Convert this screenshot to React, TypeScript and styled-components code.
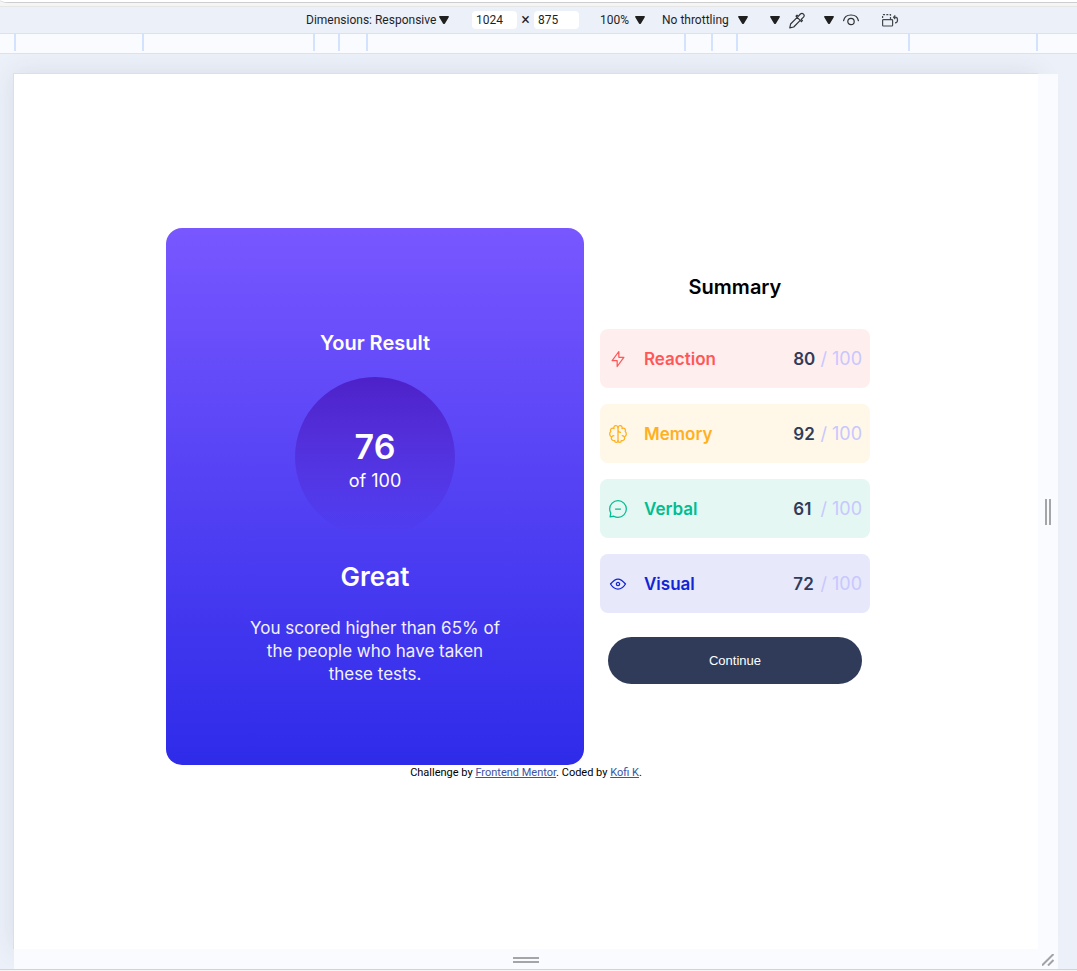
import React from "react";
import styled, { createGlobalStyle } from "styled-components";

const GlobalStyle = createGlobalStyle`
  *, *::before, *::after { box-sizing: border-box; }
  body { margin: 0; background: #f5f5f5; }
  h1, h2, p { margin: 0; }
  button, input, select { font: inherit; color: inherit; }
`;

const uiFont = `Roboto, "Open Sans", sans-serif`;
const cardFont = `Inter, "Liberation Sans", sans-serif`;

const Page = styled.div`
  display: flex;
  flex-direction: column;
  min-height: 100vh;
`;

const WindowEdge = styled.div`
  height: 3px;
  background: #fff;
  border-bottom: 1px solid #cdcdcd;
  border-bottom-left-radius: 8px 3px;
`;

const Toolbar = styled.div`
  display: flex;
  align-items: center;
  justify-content: center;
  height: 28px;
  margin-top: 3px;
  padding-left: 128px;
  background: #ebf0f9;
  border-top: 1px solid #e6e6e6;
  border-bottom: 1px solid #d6e2fb;
  font-family: ${uiFont};
  font-size: 12px;
  line-height: 18px;
  color: #1f1f1f;
`;

const Picker = styled.label<{ $width: number }>`
  display: grid;
  align-items: center;
  width: ${(p) => p.$width}px;
  flex: none;
  select, svg { grid-area: 1 / 1; }
  svg { justify-self: end; pointer-events: none; }
`;

const Select = styled.select`
  appearance: none;
  width: 100%;
  padding: 0;
  border: 0;
  background: transparent;
  outline: none;
`;

const SizeInput = styled.input`
  width: 45px;
  height: 18px;
  padding: 0 4px;
  border: 0;
  border-radius: 4px;
  background: #fff;
  outline: none;
`;

const Sizes = styled.div`
  display: flex;
  align-items: center;
  margin: 0 21px 0 23px;
`;

const Times = styled.span`
  width: 17px;
  font-size: 16px;
  text-align: center;
`;

const Tools = styled.div`
  display: flex;
  align-items: center;
  margin-left: 17px;
`;

const ToolButton = styled.button<{ $gap: number }>`
  display: flex;
  flex: none;
  margin: 0 0 0 ${(p) => p.$gap}px;
  padding: 0;
  border: 0;
  background: transparent;
`;

const Ruler = styled.div`
  display: flex;
  justify-content: center;
  height: 20px;
  padding: 0 25px 2px 0;
  background: #f9fbff;
  border-bottom: 1px solid #d6e2fb;
  overflow: hidden;
`;

const Range = styled.div<{ $width: number; $side: "left" | "right" | "both" }>`
  flex: none;
  width: ${(p) => p.$width}px;
  border: 0 solid #d3e3fd;
  border-left-width: ${(p) => (p.$side === "right" ? 0 : 2)}px;
  border-right-width: ${(p) => (p.$side === "left" ? 0 : 2)}px;
`;

const Stage = styled.div`
  display: flex;
  flex: 1;
  padding: 19px 19px 0 13px;
  background: #ebf0f9;
  border-bottom: 1px solid #d0d3d8;
  margin-bottom: 1px;
  overflow: hidden;
`;

const Device = styled.div`
  flex: 1;
  display: grid;
  grid-template-columns: 1fr 20px;
  grid-template-rows: 1fr 20px;
`;

const Screen = styled.main`
  display: flex;
  flex-direction: column;
  align-items: center;
  justify-content: center;
  background: #fff;
  border: 1px solid #dcdfe4;
  border-width: 1px 0 0 1px;
  box-shadow: 0 0 24px rgba(60, 64, 67, 0.1);
  font-family: ${cardFont};
`;

const Handle = styled.div<{ $side: "right" | "bottom" | "corner" }>`
  position: relative;
  display: flex;
  align-items: center;
  justify-content: center;
  background: #f9fbff;
  margin-top: ${(p) => (p.$side === "right" ? 1 : 0)}px;
  margin-left: ${(p) => (p.$side === "bottom" ? 1 : 0)}px;
  padding-top: ${(p) => (p.$side === "right" ? 0 : 2)}px;
`;

const Card = styled.section`
  display: flex;
  width: 720px;
  max-width: 100%;
`;

const Result = styled.div`
  display: flex;
  flex-direction: column;
  align-items: center;
  flex: 1;
  padding: 101px 80px 79px;
  border-radius: 16px;
  background: linear-gradient(#7857ff, #2e2be9);
  color: #fff;
  text-align: center;
`;

const Heading = styled.h1`
  font-size: 20px;
  font-weight: 600;
  line-height: 28px;
`;

const Circle = styled.div`
  display: flex;
  flex-direction: column;
  align-items: center;
  justify-content: center;
  width: 160px;
  height: 160px;
  margin: 20px 0 22px;
  padding-top: 4px;
  border-radius: 50%;
  background: linear-gradient(#4d21c9, rgba(37, 33, 201, 0));
`;

const Score = styled.strong`
  font-size: 34px;
  font-weight: 600;
  line-height: 44px;
`;

const OutOf = styled.span`
  font-size: 18px;
  line-height: 24px;
`;

const Grade = styled.h2`
  font-size: 26px;
  font-weight: 600;
  line-height: 36px;
`;

const Verdict = styled.p`
  margin-top: 22px;
  font-size: 17px;
  line-height: 23px;
  color: #f3f1ff;
`;

const Summary = styled.div`
  display: flex;
  flex-direction: column;
  width: 302px;
  padding: 45px 16px 0;
`;

const SummaryTitle = styled(Heading).attrs({ as: "h2" })`
  margin-bottom: 28px;
  text-align: center;
`;

const List = styled.ul`
  display: flex;
  flex-direction: column;
  gap: 16px;
  margin: 0;
  padding: 0;
  list-style: none;
`;

const Row = styled.li<{ $color: string; $tint: string }>`
  display: flex;
  align-items: center;
  height: 59px;
  padding: 0 8px;
  border-radius: 8px;
  background: ${(p) => p.$tint};
  color: ${(p) => p.$color};
  font-size: 17px;
  font-weight: 600;
  svg { margin-right: 16px; }
`;

const Points = styled.span`
  margin-left: auto;
  font-size: 18px;
  font-weight: 400;
  color: #c8c7ff;
  b {
    display: inline-block;
    min-width: 22px;
    font-size: 17px;
    font-weight: 600;
    color: #303b59;
  }
`;

const Continue = styled.button`
  height: 47px;
  margin: 24px 8px 0;
  border: 0;
  border-radius: 24px;
  background: #303b59;
  color: #fff;
  font: 13px "Liberation Sans", sans-serif;
`;

const Attribution = styled.footer`
  margin-bottom: 15px;
  font-family: ${uiFont};
  font-size: 11px;
  line-height: 15px;
  color: #000;
  a { color: #3e52a3; }
`;

const Arrow = () => (
  <svg width="10" height="8" viewBox="0 0 10 8" aria-hidden="true">
    <path d="M.8 0h8.4q1.2.3.4 1.4L6 7.4q-1 1.1-2 0L.4 1.4Q-.4.3.8 0Z" fill="#1f1f1f" />
  </svg>
);

const Eyedropper = () => (
  <svg width="16" height="17" viewBox="0 0 16 17" fill="none" stroke="#303236" strokeWidth="1.2" strokeLinejoin="round" strokeLinecap="round">
    <path d="M8.2 5.4 1.6 12 .8 15.900l3.900-.9 6.500-6.600M7 4.200l5.400 5.500 1-1-1.200-1.300 2.300-2.300c1.900-2.100-.9-5-3.100-3.100L9.200 4.300 8 3.200Z" />
  </svg>
);

const Vision = () => (
  <svg width="16" height="12" viewBox="0 0 16 12" fill="none" stroke="#303236" strokeWidth="1.2">
    <path d="M.6 6.600C2-.9 14-.9 15.400 6.600" strokeLinecap="round" />
    <circle cx="8" cy="7.500" r="3.200" />
  </svg>
);

const Rotate = () => (
  <svg width="17" height="13" viewBox="0 0 17 13" fill="none" stroke="#44474b" strokeWidth="1.2">
    <rect x=".6" y="5.600" width="10" height="6.400" rx=".8" />
    <path d="M.6 4V1.500Q.6.600 1.500.600H8.500V5" strokeDasharray="2 1.300" />
    <path d="M11.800 3.200h1.200c3.400 0 3.400 5.600 0 5.600M13.200 1.400 11.600 3.200l1.600 1.800" />
  </svg>
);

const SideGrip = () => (
  <svg width="6" height="26" aria-hidden="true">
    <path d="M1 0v26M5 0v26" stroke="#a3a5a6" strokeWidth="2" />
  </svg>
);

const BottomGrip = () => (
  <svg width="26" height="6" aria-hidden="true">
    <path d="M0 1h26M0 5h26" stroke="#a3a5a6" strokeWidth="2" />
  </svg>
);

const CornerGrip = () => (
  <svg width="12" height="12" viewBox="0 0 12 12" aria-hidden="true">
    <path d="M0 11.500 11.500 0M6 11.500 11.500 6" stroke="#a0a2a4" strokeWidth="2" />
  </svg>
);

const categories = [
  {
    name: "Reaction", score: 80, color: "#ff5757", tint: "#ffeeee",
    paths: ["M10.833 8.333V2.5l-6.666 9.167h5V17.5l6.666-9.167h-5Z"],
  },
  {
    name: "Memory", score: 92, color: "#ffb01f", tint: "#fff7e8",
    paths: [
      "M5.833 11.667a2.5 2.5 0 1 0 .834 4.858",
      "M3.553 13.004a3.333 3.333 0 0 1-.728-5.53m.025-.067a2.083 2.083 0 0 1 2.983-2.824m.199.054A2.083 2.083 0 1 1 10 3.75v12.917a1.667 1.667 0 0 1-3.333 0M10 5.833a2.5 2.5 0 0 0 2.5 2.5m1.667 3.334a2.5 2.5 0 1 1-.834 4.858",
      "M16.447 13.004a3.334 3.334 0 0 0 .728-5.53m-.025-.067a2.083 2.083 0 0 0-2.983-2.824M10 3.75a2.085 2.085 0 0 1 2.538-2.033 2.084 2.084 0 0 1 1.43 2.92m-.635 12.03a1.667 1.667 0 0 1-3.333 0",
    ],
  },
  {
    name: "Verbal", score: 61, color: "#00bd91", tint: "#e4f7f2",
    paths: ["M7.5 10h5M10 18.333A8.333 8.333 0 1 0 1.667 10c0 1.518.406 2.942 1.115 4.167l-.699 3.75 3.75-.699A8.295 8.295 0 0 0 10 18.333Z"],
  },
  {
    name: "Visual", score: 72, color: "#1125d4", tint: "#e7e8fa",
    paths: [
      "M10 11.667a1.667 1.667 0 1 0 0-3.334 1.667 1.667 0 0 0 0 3.334Z",
      "M17.5 10c-1.574 2.492-4.402 5-7.5 5s-5.926-2.508-7.5-5C4.416 7.632 6.66 5 10 5s5.584 2.632 7.5 5Z",
    ],
  },
];

export default function App() {
  return (
    <Page>
      <GlobalStyle />
      <WindowEdge />
      <Toolbar>
        <Picker $width={143}>
          <Select aria-label="Device">
            <option>Dimensions: Responsive</option>
          </Select>
          <Arrow />
        </Picker>
        <Sizes>
          <SizeInput aria-label="Width" defaultValue="1024" />
          <Times>×</Times>
          <SizeInput aria-label="Height" defaultValue="875" />
        </Sizes>
        <Picker $width={45}>
          <Select aria-label="Zoom">
            <option>100%</option>
          </Select>
          <Arrow />
        </Picker>
        <Tools>
          <Picker $width={86}>
            <Select aria-label="Throttling">
              <option>No throttling</option>
            </Select>
            <Arrow />
          </Picker>
          <ToolButton $gap={22} aria-label="Color format"><Arrow /></ToolButton>
          <ToolButton $gap={9} aria-label="Pick color"><Eyedropper /></ToolButton>
          <ToolButton $gap={19} aria-label="Vision options"><Arrow /></ToolButton>
          <ToolButton $gap={9} aria-label="Emulate vision"><Vision /></ToolButton>
          <ToolButton $gap={23} aria-label="Rotate"><Rotate /></ToolButton>
        </Tools>
      </Toolbar>
      <Ruler>
        <Range $width={128} $side="left" />
        <Range $width={171} $side="left" />
        <Range $width={25} $side="left" />
        <Range $width={28} $side="left" />
        <Range $width={320} $side="both" />
        <Range $width={27} $side="right" />
        <Range $width={25} $side="right" />
        <Range $width={172} $side="right" />
        <Range $width={128} $side="right" />
      </Ruler>
      <Stage>
        <Device>
          <Screen>
            <Card>
              <Result>
                <Heading>Your Result</Heading>
                <Circle>
                  <Score>76</Score>
                  <OutOf>of 100</OutOf>
                </Circle>
                <Grade>Great</Grade>
                <Verdict>You scored higher than 65% of the people who have taken these tests.</Verdict>
              </Result>
              <Summary>
                <SummaryTitle>Summary</SummaryTitle>
                <List>
                  {categories.map((c) => (
                    <Row key={c.name} $color={c.color} $tint={c.tint}>
                      <svg width="20" height="20" viewBox="0 0 20 20" fill="none" stroke="currentColor" strokeWidth="1.25" strokeLinecap="round" strokeLinejoin="round" aria-hidden="true">
                        {c.paths.map((d) => <path key={d} d={d} />)}
                      </svg>
                      {c.name}
                      <Points><b>{c.score}</b> / 100</Points>
                    </Row>
                  ))}
                </List>
                <Continue>Continue</Continue>
              </Summary>
            </Card>
            <Attribution>
              Challenge by <a href="#mentor">Frontend Mentor</a>. Coded by <a href="#kofi">Kofi K</a>.
            </Attribution>
          </Screen>
          <Handle $side="right"><SideGrip /></Handle>
          <Handle $side="bottom"><BottomGrip /></Handle>
          <Handle $side="corner"><CornerGrip /></Handle>
        </Device>
      </Stage>
    </Page>
  );
}
